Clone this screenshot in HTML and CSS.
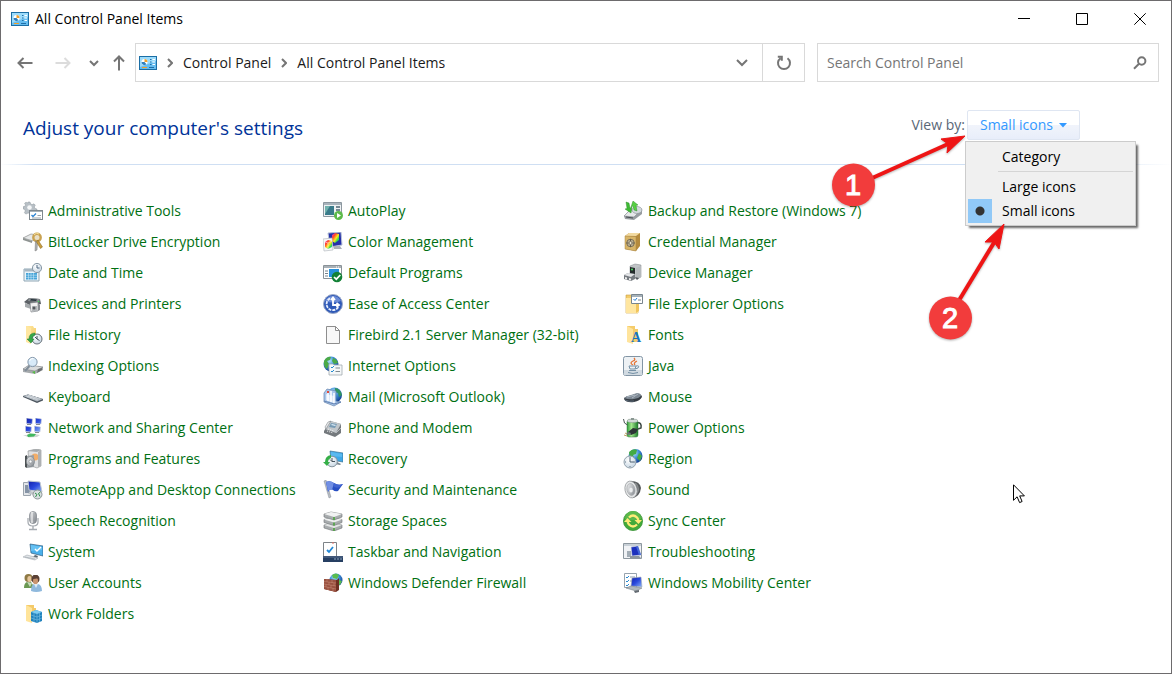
FILE: index.html
```
<!DOCTYPE html>
<html lang="en">
<head>
    <meta charset="UTF-8">
    <title>All Control Panel Items</title>
    <link rel="stylesheet" href="styles.css">
</head>
<body>
    <!-- shared gradients and the control panel logo -->
    <svg class="defs" aria-hidden="true">
        <defs>
            <linearGradient id="silver" x1="0" y1="0" x2="1" y2="1"><stop offset="0" stop-color="#f4f5f6"/><stop offset="1" stop-color="#7d8288"/></linearGradient>
            <linearGradient id="screen" x1="0" y1="0" x2="1" y2="1"><stop offset="0" stop-color="#1220a8"/><stop offset=".5" stop-color="#2a49dd"/><stop offset="1" stop-color="#8fb6f5"/></linearGradient>
            <linearGradient id="folder" x1="0" y1="0" x2="1" y2="1"><stop offset="0" stop-color="#ffe9a6"/><stop offset="1" stop-color="#f2c65c"/></linearGradient>
            <radialGradient id="globe" cx=".4" cy=".3" r=".7"><stop offset="0" stop-color="#b5e3fb"/><stop offset=".5" stop-color="#3d8fd8"/><stop offset="1" stop-color="#123f92"/></radialGradient>
            <radialGradient id="clock" cx=".4" cy=".35" r=".7"><stop offset="0" stop-color="#ffffff"/><stop offset="1" stop-color="#c3d3e0"/></radialGradient>
            <linearGradient id="green" x1="0" y1="0" x2="1" y2="0"><stop offset="0" stop-color="#2d9d38"/><stop offset=".4" stop-color="#a3e88d"/><stop offset="1" stop-color="#1a7a29"/></linearGradient>
            <linearGradient id="rainbow" x1="0" y1="0" x2="1" y2="1"><stop offset="0" stop-color="#f32bd0"/><stop offset=".3" stop-color="#ff4a2a"/><stop offset=".55" stop-color="#ffe81e"/><stop offset=".75" stop-color="#35dc4a"/><stop offset="1" stop-color="#1aa8ff"/></linearGradient>
            <symbol id="panel" viewBox="0 0 18 14">
                <rect x=".5" y=".5" width="17" height="13" fill="#66bdf0" stroke="#1b6ea5"/>
                <path d="M1 1h16v4L1 11z" fill="#9bdbfb"/>
                <circle cx="5.500" cy="6" r="3" fill="#fff"/>
                <path d="M5.500 6V3a3 3 0 0 1 3 3z" fill="#f0a02c"/>
                <path d="M5.500 6H2.500a3 3 0 0 0 5 2.200z" fill="#2f7fbd"/>
                <path d="M11 3.500h1.500M11 6h1.500M11 8.500h1.500" stroke="#1f6fa8"/>
                <path d="M13.500 3.500H16M13.500 6H16M13.500 8.500H16" stroke="#fff"/>
                <path d="M3 11.500h5" stroke="#f0a02c"/>
                <path d="M10 11.500h5" stroke="#1f6fa8"/>
            </symbol>
        </defs>
    </svg>

    <div class="window">
        <header class="title-bar">
            <svg class="logo" aria-hidden="true"><use href="#panel"/></svg>
            <h1 class="title">All Control Panel Items</h1>
            <div class="win-buttons">
                <button type="button" aria-label="Minimize"><svg width="12" height="12"><path d="M0 5.500h12"/></svg></button>
                <button type="button" aria-label="Maximize"><svg width="12" height="12"><path d="M.5.500h11v11H.5z"/></svg></button>
                <button type="button" aria-label="Close"><svg width="12" height="12"><path d="M.3.300l11.400 11.400M11.700.300L.3 11.700"/></svg></button>
            </div>
        </header>

        <nav class="nav-bar" aria-label="Navigation">
            <div class="history">
                <button type="button" class="back" aria-label="Back"><svg width="16" height="12"><path d="M15.500 6H1.500M6.500 1L1.500 6l5 5"/></svg></button>
                <button type="button" class="forward" aria-label="Forward" disabled><svg width="16" height="12"><path d="M.5 6h14M9.500 1l5 5-5 5"/></svg></button>
                <button type="button" class="recent" aria-label="Recent locations"><svg width="10" height="8"><path d="M1 2l4 4 4-4"/></svg></button>
                <button type="button" class="up" aria-label="Up"><svg width="12" height="16"><path d="M6 15.500v-14M1 6.500l5-5 5 5"/></svg></button>
            </div>
            <div class="address">
                <svg class="logo" aria-hidden="true"><use href="#panel"/></svg>
                <ol class="crumbs">
                    <li><svg width="6" height="10"><path d="M1 1l4 4-4 4"/></svg><a href="#">Control Panel</a></li>
                    <li><svg width="6" height="10"><path d="M1 1l4 4-4 4"/></svg><a href="#">All Control Panel Items</a></li>
                </ol>
                <button type="button" class="previous" aria-label="Previous locations"><svg width="12" height="8"><path d="M1 1l5 5 5-5"/></svg></button>
                <button type="button" class="refresh" aria-label="Refresh"><svg width="16" height="16"><path d="M11.500 3.200A6 6 0 1 1 4.500 3.200M1.800 1.800h4v4"/></svg></button>
            </div>
            <form class="search">
                <input type="text" placeholder="Search Control Panel" aria-label="Search Control Panel">
                <button type="button" aria-label="Search"><svg width="14" height="14"><circle cx="8.700" cy="5" r="3.700"/><path d="M6 7.700L1 12.800"/></svg></button>
            </form>
        </nav>

        <main>
            <div class="heading">
                <h2>Adjust your computer's settings</h2>
                <div class="view-by">
                    <span id="view-label">View by:</span>
                    <button type="button" class="view-button" aria-haspopup="menu" aria-expanded="true" aria-describedby="view-label">Small icons <svg width="8" height="5"><path d="M0 0h8L4 4.500z"/></svg></button>
                    <div class="menu" role="menu">
                        <button type="button" role="menuitemradio" aria-checked="false">Category</button>
                        <hr>
                        <button type="button" role="menuitemradio" aria-checked="false">Large icons</button>
                        <button type="button" role="menuitemradio" aria-checked="true">Small icons</button>
                    </div>
                    <!-- numbered steps -->
                    <svg class="steps" width="250" height="250" viewBox="830 100 250 250">
                        <g class="arrow">
                            <path d="M870 179L948 144" />
                            <path d="M958 302L995 241" />
                            <path class="head" d="M965 136l-18 17 1-9-7-5z"/>
                            <path class="head" d="M1004 224l-5 25-5-7-9 0z"/>
                        </g>
                        <circle cx="853.500" cy="185" r="21.500"/>
                        <circle cx="950.500" cy="318" r="21.500"/>
                        <text x="853" y="195">1</text>
                        <text x="950" y="328">2</text>
                    </svg>
                </div>
            </div>

            <div class="items">
                <ul>
                    <li><a href="#"><svg viewBox="0 0 20 20">
                        <path d="M5 1h2l.6 2 1.600.6L11 2.800l1.300 1.400-1 1.700.6 1.500 2 .6v2l-2 .5-.6 1.500H6l-1.500.3-1.700.8-1.400-1.400.9-1.700L1.700 8.500 0 7.800v-2l2-.5.500-1.400-.9-1.600L3 1.200l1.500.7z" fill="#b8c0c6" stroke="#8d969d" stroke-width=".5"/>
                        <circle cx="6.500" cy="6.500" r="2.300" fill="#f5f7f8"/>
                        <rect x="6.500" y="9.500" width="13" height="9" fill="#fff" stroke="#7e878e"/><path d="M7 10.500h12" stroke="#a9b2b9"/><path d="M8.500 14l1.500 1.500 3-3" fill="none" stroke="#2b83d3" stroke-width="1.300"/><path d="M14.500 14.500H18M9 17h9" stroke="#9aa3ab"/>
                    </svg>Administrative Tools</a></li>
                    <li><a href="#"><svg viewBox="0 0 20 20">
                        <path d="M0 6l8-4 7 1-5 6z" fill="#e6e8e8" stroke="#8a8d8c" stroke-width=".7"/><path d="M0 6l9 3v2L0 8z" fill="#8f9492"/>
                        <circle cx="14" cy="5.500" r="3.700" fill="#e9dfc6" stroke="#c9a251" stroke-width="2.400"/><path d="M12.500 9l-.5 10 2-1 .5-8.500z" fill="#aeb1b2" stroke="#777" stroke-width=".5"/><path d="M15 8l4.500 7-2 1.500L13.500 10z" fill="#c99d3d" stroke="#82601d" stroke-width=".5"/><path d="M11 3q2-3 5-1" stroke="#f7e1a1" fill="none"/>
                    </svg>BitLocker Drive Encryption</a></li>
                    <li><a href="#"><svg viewBox="0 0 20 20">
                        <path d="M1 6h15v12H1z" fill="#e9f4fa" stroke="#8fa6b4"/><path d="M1.500 6h14v2.500h-14z" fill="#a7b7c2"/><path d="M3 10h11v6.500H3z" fill="#47a4d8"/><path d="M5.500 10v7M8 10v7M10.500 10v7M3 12.200h11M3 14.400h11" stroke="#d7effb" stroke-width=".5"/>
                        <circle cx="14" cy="5" r="4.600" fill="url(#clock)" stroke="#8999a6"/><path d="M14 2v3h2.500" fill="none" stroke="#4a6580"/>
                    </svg>Date and Time</a></li>
                    <li><a href="#"><svg viewBox="0 0 20 20">
                        <path d="M1 8l5-4 11 1 1 5-10 2z" fill="#5b6065"/><path d="M6 4l11 1-1 3-11-1z" fill="#898e92"/><path d="M8 5l6 .5-1 1.500-6-.5z" fill="#253139"/><path d="M2 9l6 2v4l-6-2z" fill="#a5a9ac"/><circle cx="15.500" cy="7.500" r=".8" fill="#4dd35d"/>
                        <path d="M7 9l8-1v9l-7 1z" fill="#f1f1f1" stroke="#7e8387" stroke-width=".7"/><path d="M9 12h5v5l-5 .5z" fill="#b3b7ba"/><circle cx="11" cy="14" r="1.500" fill="#55595d"/><path d="M15 9l2 2v5l-2 1z" fill="#888c91"/>
                    </svg>Devices and Printers</a></li>
                    <li><a href="#"><svg viewBox="0 0 20 20">
                        <path d="M3 1h7l1 2h2v14H3z" fill="url(#folder)"/><path d="M3 1l5 2v16l-5-2z" fill="#ffe7a1"/>
                        <circle cx="14" cy="14" r="5" fill="url(#clock)" stroke="#68727a"/><path d="M14 11v3l2.500 1.500M14 14l-2-2" fill="none" stroke="#40525d"/><path d="M12 8Q6 8 6 14H4l4 4 3-4H9q0-3 3-4z" fill="#35a84a" stroke="#1e7c31" stroke-width=".5"/>
                    </svg>File History</a></li>
                    <li><a href="#"><svg viewBox="0 0 20 20">
                        <path d="M0 13l6-4 14 2v3l-8 4-12-2z" fill="#a6aaad"/><path d="M0 13l6-4 14 2-8 4z" fill="#dadcdd" stroke="#73777a" stroke-width=".5"/><path d="M9 16l3-1v3" fill="#54bd43"/><path d="M15 13l4-1v2l-5 3z" fill="#6a6e71"/>
                        <circle cx="9.500" cy="6" r="4.600" fill="#d4e8f7" fill-opacity=".9" stroke="#8296aa"/><path d="M6.500 5q1-3 4-2.500" fill="none" stroke="#fff"/><path d="M6.500 10L2 15" stroke="#818d98" stroke-width="2"/>
                    </svg>Indexing Options</a></li>
                    <li><a href="#"><svg viewBox="0 0 20 20">
                        <path d="M0 9l5-1.500L20 12v1.500L14 16 0 10z" fill="#4c555e"/><path d="M0 9l5-1.500L20 12l-6 2.500z" fill="#aab3bb"/><path d="M3 9l12 4M5 8.300l12 4M4 10l4-1.500M7 11l4-1.500M10 12l4-1.500" stroke="#e3e7ea" stroke-width=".5"/>
                    </svg>Keyboard</a></li>
                    <li><a href="#"><svg viewBox="0 0 20 20">
                        <path d="M3.500 0l6 1-.5 5-5.500-.5zM12.500 0l6 1-.5 5-5.500-.5zM2.500 8l6 1-.5 5-5.500-.5zM11.500 8l6 1-.5 5-5.500-.5z" fill="url(#screen)" stroke="#cbd2dd" stroke-width=".6"/><path d="M4 6.500h4M13 6.500h4M3 14.500h4M12 14.500h4" stroke="#83888e"/>
                        <path d="M0 17h4l2-1.500 6 .5 5 1-3 2-8 .5z" fill="#cfd5d3"/><path d="M4 17l3-1.500 6 .5-2 2.500-6 .5z" fill="#41b85d"/>
                    </svg>Network and Sharing Center</a></li>
                    <li><a href="#"><svg viewBox="0 0 20 20">
                        <path d="M5 2l8-2 5 1v16l-4 2-8-3z" fill="#e0e1e2" stroke="#8b8f91" stroke-width=".6"/><path d="M5 2l9 1 4-2-5-1z" fill="#a6aaac"/><circle cx="12" cy="8" r="3.500" fill="#f2ad68"/><path d="M15 3l3-2v16l-3 1z" fill="#aeb1b3"/>
                        <path d="M2 7l2-1v13l-2-1z" fill="#4e5355"/><path d="M4 7l7-1v12l-7 1z" fill="#9ba1a5"/><ellipse cx="7.500" cy="12.500" rx="4" ry="5" fill="url(#silver)" stroke="#7f878d" stroke-width=".7"/><circle cx="7.500" cy="12.500" r="1.500" fill="#fff" stroke="#858c91" stroke-width=".6"/>
                    </svg>Programs and Features</a></li>
                    <li><a href="#"><svg viewBox="0 0 20 20">
                        <path d="M.5 2.500h7v13h-7z" fill="#e3e6ea" stroke="#9ca4ad"/><path d="M2 5h6v8H2z" fill="#8694a6"/><path d="M5 1l12 1 2 10-13-2z" fill="url(#screen)" stroke="#c1c8d0"/><path d="M7 11l7 1-1 3-8-1z" fill="#c2c7cb"/>
                        <circle cx="14.500" cy="14.500" r="4.500" fill="#d8dfe0" stroke="#8d9698"/><path d="M12 13l2 1.500-1.500 2.500M17.500 12l-2 1.500 1.500 3" fill="none" stroke="#31914c"/>
                    </svg>RemoteApp and Desktop Connections</a></li>
                    <li><a href="#"><svg viewBox="0 0 20 20">
                        <path d="M5 7v4q0 4 5 4t5-4V7" fill="none" stroke="#a3a8ae" stroke-width="1.200"/><path d="M10 15v3M6 18.500h8" stroke="#a7acb2" stroke-width="1.400"/>
                        <rect x="6.500" y=".5" width="7" height="12" rx="3.500" fill="url(#silver)" stroke="#858a91" stroke-width=".8"/><path d="M7 3h6M7 5h6M7 7h6M7 9h6" stroke="#797e87" stroke-width=".5"/><path d="M9 1v11" stroke="#fff"/>
                    </svg>Speech Recognition</a></li>
                    <li><a href="#"><svg viewBox="0 0 20 20">
                        <path d="M7 2l13 2v10L8 11z" fill="#4bb0eb" stroke="#315f82" stroke-width=".7"/><path d="M8 3l11 2v3L8 9z" fill="#65c1f3"/><path d="M12 7l2 2 4-4" fill="none" stroke="#fff" stroke-width="1.400"/><path d="M12 13l3 1-1 2-4-1z" fill="#58646e"/>
                        <path d="M0 15l4-2 11 3-3 2z" fill="#e2e5e8" stroke="#a4abb1" stroke-width=".6"/><path d="M2 15l10 2" stroke="#9ba4ab" stroke-width=".6"/>
                    </svg>System</a></li>
                    <li><a href="#"><svg viewBox="0 0 20 20">
                        <path d="M1 15q0-5 3-6h4l4 6z" fill="#6b9953"/><circle cx="5.500" cy="5" r="4" fill="#8f7a45"/><ellipse cx="6.500" cy="6" rx="2.200" ry="3" fill="#e6c69c"/><path d="M4 9l3 5 2-4z" fill="#c9d9bd"/>
                        <path d="M8 18q0-6 3-7h4q4 1 4 7-6 2-11 0z" fill="#8fb9dd"/><circle cx="12.500" cy="6" r="4" fill="#5b4135"/><ellipse cx="12.500" cy="8" rx="2.500" ry="3.300" fill="#c9946f"/><path d="M9.500 6q3 0 6-1l-1-3h-4z" fill="#5a4136"/><path d="M11 11l2 4 2-4z" fill="#dfebf5"/>
                    </svg>User Accounts</a></li>
                    <li><a href="#"><svg viewBox="0 0 20 20">
                        <path d="M3 1h8v3h2v13H3z" fill="#f4ca69"/><path d="M3 1l6 3v15l-6-2z" fill="#ffe49a"/>
                        <path d="M8 8l5-2 6 2v9l-5 2-6-2z" fill="#2182bd"/><path d="M8 8l5-2 6 2-5 2z" fill="#7dcbf1"/><path d="M14 10v9M8 11l6 2 5-2M8 14l6 2 5-2M11 9v9M16.500 9v9" fill="none" stroke="#76bde2" stroke-width=".6"/>
                    </svg>Work Folders</a></li>
                </ul>
                <ul>
                    <li><a href="#"><svg viewBox="0 0 20 20">
                        <path d="M.5 1.500h18v14H.5z" fill="#eef1f3" stroke="#8c979f"/><path d="M1 2h17v2H1z" fill="#a9b4bc"/><path d="M2 5h9v9H2z" fill="#397b8a"/><path d="M2 5h5l-5 8z" fill="#71b2ae"/><path d="M13 6h4M13 9h4" stroke="#768993" stroke-width="2"/>
                        <circle cx="15.500" cy="14.500" r="4.500" fill="#5dba4a"/><path d="M14 12l4 2.500-4 2.500z" fill="#fff"/>
                    </svg>AutoPlay</a></li>
                    <li><a href="#"><svg viewBox="0 0 20 20">
                        <path d="M5 1l13-1 1 13-12 2z" fill="#2530a8" stroke="#b8c2d7"/><path d="M9 3l3-2 4 1v6l-4 3-3-2z" fill="url(#rainbow)"/><path d="M10 14h7l2 3h-8z" fill="#abb1b8"/>
                        <path d="M0 7l9-1 1 12-9 1z" fill="#f6f7f8" stroke="#b8bdc3" stroke-width=".7"/><path d="M2 10l3-2 4 1v6l-4 2-3-2z" fill="url(#rainbow)"/><path d="M2 10l3 1v6M5 11l4-2" fill="none" stroke="#fff" stroke-width=".5"/>
                    </svg>Color Management</a></li>
                    <li><a href="#"><svg viewBox="0 0 20 20">
                        <path d="M.5 2.500h18v13H.5z" fill="#fff" stroke="#8a9298"/><path d="M1 3h17v2H1z" fill="#a9b1b7"/><path d="M13 4h1M15 4h1" stroke="#fff"/><path d="M2 8h3M2 10.500h3M2 13h3" stroke="#74818b" stroke-width="1.200"/><path d="M6 6h10v8H6z" fill="#2791db"/>
                        <circle cx="14" cy="14" r="5.300" fill="#138136"/><path d="M11 14l2.300 2.200 4-4.200" fill="none" stroke="#fff" stroke-width="1.700"/>
                    </svg>Default Programs</a></li>
                    <li><a href="#"><svg viewBox="0 0 20 20">
                        <circle cx="10" cy="10" r="9.500" fill="#2e59b7" stroke="#9ba9c8"/><path d="M2 7a9 9 0 0 1 16 0Q10 10 2 7z" fill="#6c8cd6"/><path d="M15.200 13a6.200 6.200 0 1 1-7-9" fill="none" stroke="#e8effd" stroke-width="1.800" stroke-dasharray="3 1"/><path d="M10 4v7h5M8 6l2-2.500L12 6M13.500 9l2.500 2-2.500 2" fill="none" stroke="#fff" stroke-width="1.800"/>
                    </svg>Ease of Access Center</a></li>
                    <li><a href="#"><svg viewBox="0 0 20 20">
                        <path d="M3.500 1.500h9l4 4v13h-13z" fill="#f8f8f8" stroke="#8e8e8e"/><path d="M12.500 1.500v4h4z" fill="#fff" stroke="#8e8e8e"/>
                    </svg>Firebird 2.1 Server Manager (32-bit)</a></li>
                    <li><a href="#"><svg viewBox="0 0 20 20">
                        <circle cx="8" cy="8" r="7.500" fill="url(#globe)"/><path d="M1 5q3-5 7-4l-1 3-3 1 2 3-2 5Q0 10 1 5zM10 2q4 1 5 5l-4 1-2-3z" fill="#4baa47"/>
                        <path d="M6 8h4l1 1h8v10H6z" fill="#f4f7f8" stroke="#a1a9af" stroke-width=".8"/><path d="M8 11l1 1 2-2M8 15l1 1 2-2" fill="none" stroke="#238bd0"/><path d="M12.500 12H17M12.500 15.500H17" stroke="#7f8a91"/>
                    </svg>Internet Options</a></li>
                    <li><a href="#"><svg viewBox="0 0 20 20">
                        <circle cx="11.500" cy="8" r="7.500" fill="url(#globe)"/><path d="M12 1q5 0 7 7l-3 2-1-4-3-1z" fill="#309460"/>
                        <path d="M1 6l3-4 9 2v10l5 1-7 4-10-4z" fill="#a9c7eb" stroke="#6482ae" stroke-width=".7"/><path d="M3 7l8 2v7l-8-3z" fill="#dce9f8"/><path d="M5 5v9M8 4v11M11 6v10" stroke="#fff" stroke-width="1.500"/><path d="M4 4h2v2H4z" fill="#e24b3b"/><path d="M1 14l10 3 7-2" fill="none" stroke="#6683b1"/>
                    </svg>Mail (Microsoft Outlook)</a></li>
                    <li><a href="#"><svg viewBox="0 0 20 20">
                        <path d="M1 13l6-10 11 3v9l-6 4-11-4z" fill="#74797d"/><path d="M2 11l6-8 10 3-5 9z" fill="#c1c6ca"/><path d="M8 5l6 1-2 4-6-1z" fill="#769ab4"/><path d="M9 6l4 1-1 1-4-1z" fill="#d8eaf5"/><path d="M2 9l3-5 3-1-5 8z" fill="#e3e5e7" stroke="#777c80" stroke-width=".5"/><path d="M5 11l6 2M4 13l6 2" stroke="#efefef" stroke-dasharray="1 1"/><path d="M13 15l5-5" stroke="#b6babd"/>
                    </svg>Phone and Modem</a></li>
                    <li><a href="#"><svg viewBox="0 0 20 20">
                        <path d="M7 2l13 2v9L8 11z" fill="#3fa8e7" stroke="#3e7294" stroke-width=".7"/><path d="M8 3l11 2v3L8 7z" fill="#5ab9f0"/><path d="M14 13l4 2-1 1-5-1z" fill="#79858e"/>
                        <circle cx="9" cy="12.500" r="5.300" fill="url(#clock)" stroke="#87959e"/><path d="M9 9v3.500h3M9 12.500l-2-2" fill="none" stroke="#44535e"/><path d="M8 6Q2 7 2 13H0l4 4 3-4H5q0-3 3-4z" fill="#36af48"/>
                    </svg>Recovery</a></li>
                    <li><a href="#"><svg viewBox="0 0 20 20">
                        <path d="M1 1l2-1 5 17-2 1z" fill="#b8bdc4" stroke="#747c88" stroke-width=".4"/><path d="M3 2q4-2 8 1 4 3 9 1l-5 7q-3 1-5-1-3-2-5 2z" fill="#284fc3"/><path d="M3 2q4-2 8 1l-2 7q-2-1-4 1z" fill="#718fe4"/><path d="M11 3q4 3 9 1l-3 3q-4 2-7-1z" fill="#4164d0"/>
                    </svg>Security and Maintenance</a></li>
                    <li><a href="#"><svg viewBox="0 0 20 20">
                        <path d="M1 14l7-2 11 2v3l-8 3-10-3z" fill="#a8acae" stroke="#6f7476" stroke-width=".6"/><path d="M1 14l7-2 11 2-8 3z" fill="#e4e6e6"/>
                        <path d="M1 8.500l7-2 11 2v3l-8 3-10-3z" fill="#a8acae" stroke="#6f7476" stroke-width=".6"/><path d="M1 8.500l7-2 11 2-8 3z" fill="#eef0f0"/>
                        <path d="M1 3l7-2 11 2v3l-8 3-10-3z" fill="#a8acae" stroke="#6f7476" stroke-width=".6"/><path d="M1 3l7-2 11 2-8 3z" fill="#f1f2f2"/><path d="M11 6v3M11 11.500v3M11 17v3" stroke="#47a538" stroke-width="1.500"/>
                    </svg>Storage Spaces</a></li>
                    <li><a href="#"><svg viewBox="0 0 20 20">
                        <path d="M.5.500h13v14H.5z" fill="#fff" stroke="#7d8388"/><path d="M9 1h2" stroke="#e26c63"/><path d="M4 8l2 2 4-5" fill="none" stroke="#2187d7" stroke-width="1.800"/><path d="M0 14h20v6H0z" fill="#263f62"/><path d="M0 14h20v2H0z" fill="#41587a"/><path d="M11 17h2M14 17h2M17 17h2" stroke="#8ea4bf"/>
                    </svg>Taskbar and Navigation</a></li>
                    <li><a href="#"><svg viewBox="0 0 20 20">
                        <circle cx="13" cy="7" r="6.500" fill="url(#globe)"/><path d="M9 2q4-3 7 0l-2 4-4-1zM16 7l3 1-2 4-2-1z" fill="#59bd4d"/>
                        <path d="M1 6l13 1 2-2v12l-3 2-12-3z" fill="#6f3022"/><path d="M1 6l12 1v12L1 16z" fill="#9a5140"/><path d="M1 8.500l12 1.500M1 11l12 2M1 13.500l12 2.500M4 6v3M9 7v3M6 9v3M11 10v3M3 11v3M8 12v3M5 14v3M10 15v3" stroke="#c98e7a" stroke-width=".5"/>
                    </svg>Windows Defender Firewall</a></li>
                </ul>
                <ul>
                    <li><a href="#"><svg viewBox="0 0 20 20">
                        <path d="M1 15l5-5 13-2v5l-8 6-9-1z" fill="#989da1"/><path d="M1 15l6-6 12-1-8 8z" fill="#e6e8e9" stroke="#777d82" stroke-width=".5"/><ellipse cx="14" cy="9" rx="5" ry="3.500" fill="#d3d9dc" stroke="#848d93" stroke-width=".6"/><path d="M3 16l7 1" stroke="#4a5055"/>
                        <path d="M3 1l3 1 1 5 2-1-1 6-6-4 2-.5z" fill="#3fbb35" stroke="#21831e" stroke-width=".4"/><path d="M14 10l-3-1-1-4-2 1 2-6 5 4-2 .5z" fill="#57cf43" stroke="#21831e" stroke-width=".4"/>
                    </svg>Backup and Restore (Windows 7)</a></li>
                    <li><a href="#"><svg viewBox="0 0 20 20">
                        <path d="M2 4l4-3h11v13l-4 5L2 17z" fill="#b58b3d"/><path d="M2 4l4-3h11l-4 3z" fill="#f2daa0"/><path d="M2 4l11 .5V19L2 17z" fill="#d8b568" stroke="#a98545" stroke-width=".5"/><circle cx="7.500" cy="11" r="3.800" fill="#b9ae93" stroke="#7d7158"/><circle cx="7.500" cy="11" r="1.500" fill="#eee6d1" stroke="#665e4c" stroke-width=".7"/><path d="M7.500 7v2M7.500 13v2M3.500 11h2M9.500 11h2" stroke="#675d48"/>
                    </svg>Credential Manager</a></li>
                    <li><a href="#"><svg viewBox="0 0 20 20">
                        <path d="M7 3l5-2 6 1v12l-4 2-7-3z" fill="#c1c4c7" stroke="#7d8286" stroke-width=".5"/><path d="M7 4l5 1v8l-5-1z" fill="#252c2c"/><circle cx="9" cy="6.500" r="1" fill="#4cda62"/><path d="M13 5l5-2v11l-5 2z" fill="#b5b9bc"/>
                        <path d="M1 12l4-2 7 1v5l-4 2-7-2z" fill="#767b80"/><path d="M1 12l4-2 7 1-4 3z" fill="#e2e4e6"/><path d="M2 14l2 .5v2L2 16zM6 15l2 .5v2L6 17z" fill="#ededed"/><path d="M12 14l4 1-2 2z" fill="#55595e"/>
                    </svg>Device Manager</a></li>
                    <li><a href="#"><svg viewBox="0 0 20 20">
                        <path d="M3 1h7l2 2h3v16H3z" fill="#f3cc6b" stroke="#c99f40" stroke-width=".6"/><path d="M3 4h12v15H3z" fill="#ffe6a0"/><path d="M13 19l3-2V7h-3z" fill="#f0c55e"/>
                        <path d="M8.500.500h11v9h-11z" fill="#fff" stroke="#78858e"/><path d="M9 1h10v2H9z" fill="#a6b2ba"/><path d="M10.500 5l1.500 1.500L14 4" fill="none" stroke="#237fd2"/><path d="M15 6h3" stroke="#75828b"/>
                    </svg>File Explorer Options</a></li>
                    <li><a href="#"><svg viewBox="0 0 20 20">
                        <path d="M4 1h8v3h3v13H4z" fill="#f5cc6b"/><path d="M4 1l6 3v15l-6-2z" fill="#ffe49c"/>
                        <text x="8" y="17" class="font-mark">A</text>
                    </svg>Fonts</a></li>
                    <li><a href="#"><svg viewBox="0 0 20 20">
                        <rect x=".5" y=".5" width="19" height="19" rx="2" fill="#edf1f4" stroke="#8295a5"/><path d="M1 14h18v5H1z" fill="#d1dae1"/>
                        <path d="M10 9q-4-2 0-4 3-1 1-3M12 9q-2-2 2-4" fill="none" stroke="#e57436" stroke-width="1.300"/><path d="M6 10h7l-1 3H7zM6 14.500h7M5 16.500q5 2 10 0M13 10q4-1 2 2l-3 1" fill="none" stroke="#7490a5"/>
                    </svg>Java</a></li>
                    <li><a href="#"><svg viewBox="0 0 20 20">
                        <path d="M1 12q0-2 5-3l8-2q5 0 5 3-2 4-8 5-8 1-10-3z" fill="#363c43"/><path d="M1 11q2-2 7-3l6-2q4 0 4 3-3 3-7 3-5 1-10-1z" fill="#7d8893"/><path d="M4 10l8-2M9 11l6-4" stroke="#b9c3cd" stroke-width=".8"/><path d="M2 13q4 2 9 1" fill="none" stroke="#5c6b7a"/>
                    </svg>Mouse</a></li>
                    <li><a href="#"><svg viewBox="0 0 20 20">
                        <path d="M14 5q5-1 4 5l-3 1" fill="none" stroke="#3b4743" stroke-width="1.500"/><rect x="4" y="2" width="11" height="17" rx="2" fill="url(#green)" stroke="#397840" stroke-width=".5"/><ellipse cx="9.500" cy="2.800" rx="5.500" ry="1.800" fill="#d4dbd9" stroke="#818e87" stroke-width=".5"/><path d="M8 0h3v2H8z" fill="#8a9792"/>
                        <path d="M.5 1q0 5 4 6" fill="none" stroke="#4a5553"/><path d="M5 14l5-4 5 1-2 4-5 2z" fill="#2d3535"/><path d="M5 14l3 1-1 2-4-1z" fill="#6a7475"/><path d="M2 15l2 1M1 17l3 1" stroke="#c1a465"/>
                    </svg>Power Options</a></li>
                    <li><a href="#"><svg viewBox="0 0 20 20">
                        <circle cx="12.500" cy="7" r="7" fill="url(#globe)"/><path d="M6 3q4-4 8-2l-1 4-3 1 1 3-4 1zM16 4l3 3-2 5-3-3z" fill="#43ab42"/>
                        <circle cx="7" cy="13" r="6" fill="url(#clock)" stroke="#93a1ac"/><path d="M7 9v4h4" fill="none" stroke="#4c6071"/><path d="M7 8v1M7 17v1M2 13h1M11 13h1" stroke="#667987"/>
                    </svg>Region</a></li>
                    <li><a href="#"><svg viewBox="0 0 20 20">
                        <path d="M8 1q9 0 10 7-1 8-8 10z" fill="#55585a"/><path d="M12 3q4 3 3 8l-3 5" fill="none" stroke="#85898b" stroke-width="1.500"/>
                        <ellipse cx="8" cy="9.500" rx="6" ry="8.500" fill="#e4e6e7" stroke="#8f9396" stroke-width=".7" transform="rotate(-12 8 9.500)"/><ellipse cx="8" cy="9.500" rx="4" ry="6" fill="url(#silver)" stroke="#a2a6a9" stroke-width=".6" transform="rotate(-12 8 9.500)"/><ellipse cx="8" cy="10" rx="1.800" ry="2.600" fill="#eceeef"/>
                    </svg>Sound</a></li>
                    <li><a href="#"><svg viewBox="0 0 20 20">
                        <circle cx="10" cy="10" r="9.600" fill="#43aa39" stroke="#2f8d2d" stroke-width=".7"/><path d="M2 8a8 8 0 0 1 16 0Q10 10 2 8z" fill="#5cb94b"/><path d="M6 6.500q4-4 8 0l1.500 2.500M14 13.500q-4 4-8 0L4.500 11" fill="none" stroke="#ffeb78" stroke-width="2.300"/><path d="M11.500 9h7.500l-3.500 4zM1 11h7.500L4.500 7z" fill="#ffeb78"/>
                    </svg>Sync Center</a></li>
                    <li><a href="#"><svg viewBox="0 0 20 20">
                        <path d="M.5 1.500h18v15H.5z" fill="#f0f2f5" stroke="#8d979f"/><path d="M1 2h17v2H1z" fill="#c8d0d7"/><path d="M4 9h4v6H4z" fill="#a3adb6"/><path d="M8 5l7-1 3 9-9 1z" fill="#1b30bd" stroke="#d0d6dd" stroke-width=".6"/><path d="M13 4.500l2-.3 3 8.500-2 .5z" fill="#4468d8"/><path d="M7 14l9 0 2 2H7z" fill="#8c969e"/>
                    </svg>Troubleshooting</a></li>
                    <li><a href="#"><svg viewBox="0 0 20 20">
                        <path d="M1.500.500h12v14h-12z" fill="#fff" stroke="#97a3ae"/><path d="M3 4l1 1 2-2M3 8l1 1 2-2M3 12l1 1 2-2" fill="none" stroke="#2789d0"/><path d="M7 4h5M7 8h5" stroke="#8f9eaa"/>
                        <path d="M9 5l9-1 1 10-11-1z" fill="url(#screen)" stroke="#a8b1ba" stroke-width=".6"/><path d="M3 15l5-2 11 2-6 3z" fill="#b0b7bd" stroke="#6a747d" stroke-width=".5"/><path d="M11 18l5-1v2l-4 1z" fill="#626970"/>
                    </svg>Windows Mobility Center</a></li>
                </ul>
            </div>
        </main>

        <svg class="cursor" width="12" height="20" aria-hidden="true"><path d="M.5.800v15.500l3.600-3.500 2.500 5.800 2.500-1.100-2.400-5.600h4.700z"/></svg>
    </div>
</body>
</html>
```

FILE: styles.css
```
* {
    margin: 0;
    padding: 0;
    box-sizing: border-box;
}
body {
    font-family: "Open Sans", "Noto Sans", sans-serif;
    font-size: 14px;
    line-height: 20px;
    color: #000;
    background: #fff;
}
ul, ol {
    list-style: none;
}
a {
    color: inherit;
    text-decoration: none;
}
button, input {
    font: inherit;
    border: 0;
    background: none;
    outline: none;
}
svg {
    flex: none;
}
.defs {
    position: absolute;
    width: 0;
    height: 0;
}
.window {
    position: relative;
    min-height: 100vh;
    border: 1px solid #6d6b6d;
    background: #fff;
}
.logo {
    width: 18px;
    height: 14px;
}

/* title bar */
.title-bar {
    display: flex;
    align-items: center;
    height: 36px;
    padding: 0 2px 0 10px;
}
.title {
    flex: 1;
    margin-left: 6px;
    font-size: 14px;
    font-weight: 400;
}
.win-buttons {
    display: flex;
}
.win-buttons button {
    width: 58px;
    height: 36px;
}
.win-buttons svg {
    display: block;
    margin: 0 auto;
    fill: none;
    stroke: #000;
}

/* navigation */
.nav-bar {
    display: flex;
    padding: 6px 12px 0 5px;
}
.nav-bar svg {
    fill: none;
    stroke: #757575;
    stroke-width: 2;
}
.nav-bar .logo {
    stroke: none;
    stroke-width: 1;
}
.nav-bar button {
    display: flex;
    align-items: center;
    justify-content: center;
}
.history {
    display: flex;
    margin-right: 2px;
}
.history .back,
.history .forward {
    width: 38px;
}
.history .forward svg {
    stroke: #dcdcdc;
}
.history .recent {
    width: 23px;
}
.history .up {
    width: 28px;
}
.address {
    display: flex;
    flex: 1;
    align-items: center;
    height: 39px;
    padding-left: 3px;
    border: 1px solid #d9d9d9;
}
.crumbs {
    display: flex;
    flex: 1;
    color: #1a1a1a;
}
.crumbs li {
    display: flex;
    align-items: center;
    gap: 10px;
    margin-left: 10px;
    white-space: nowrap;
}
.previous {
    width: 40px;
    height: 37px;
}
.refresh {
    width: 42px;
    height: 37px;
    border-left: 1px solid #d9d9d9;
}
.search {
    display: flex;
    flex: 0 1 342px;
    height: 39px;
    margin-left: 12px;
    border: 1px solid #d9d9d9;
}
.search input {
    flex: 1;
    min-width: 0;
    padding-left: 9px;
}
.search input::placeholder {
    color: #767676;
    opacity: 1;
}
.search button {
    width: 36px;
}

/* heading */
.heading {
    display: flex;
    align-items: flex-end;
    justify-content: space-between;
    padding: 28px 91px 24px 22px;
    border-bottom: 1px solid;
    border-image: linear-gradient(to right, #fff, #cfdff3 3%, #cfdff3 92%, #fff) 1;
}
.heading h2 {
    font-size: 19px;
    line-height: 24px;
    font-weight: 400;
    color: #003399;
}
.view-by {
    display: flex;
    align-items: center;
    gap: 2px;
    position: relative;
    color: #5a6777;
}
.view-button {
    display: flex;
    align-items: center;
    gap: 6px;
    height: 30px;
    padding: 0 12px;
    border: 1px solid #dfe6f2;
    border-radius: 2px;
    color: #3399ff;
    background: linear-gradient(#fff 50%, #f1f4fb 50%, #e8eefa);
}
.view-button svg {
    fill: #3399ff;
}
.menu {
    position: absolute;
    z-index: 1;
    top: 31px;
    right: -56px;
    width: 171px;
    padding: 3px 2px 2px;
    border: 1px solid #ccc;
    background: #f0f0f0;
    box-shadow: 3px 3px 2px -1px rgba(0, 0, 0, .6);
}
.menu button {
    display: block;
    width: 100%;
    height: 24px;
    padding-left: 34px;
    text-align: left;
    color: #000;
}
.menu hr {
    height: 1px;
    margin: 2px 0 3px 30px;
    border: 0;
    background: #d5d5d5;
}
/* tick square in the left gutter of the menu */
.menu button[aria-checked="true"] {
    background: radial-gradient(circle, #333 4px, transparent 5px) 0 0 / 24px 24px no-repeat,
        linear-gradient(#91c9f7, #91c9f7) 0 0 / 24px 24px no-repeat;
}

/* numbered steps over the window */
.steps {
    position: absolute;
    z-index: 2;
    top: -10px;
    right: 0;
    pointer-events: none;
}
.steps circle {
    fill: #f23c3c;
    filter: drop-shadow(0 1px 1px rgba(0, 0, 0, .3));
}
.steps text {
    fill: #fff;
    stroke: #fff;
    font-family: "Liberation Sans", sans-serif;
    font-size: 29px;
    text-anchor: middle;
}
.arrow {
    fill: none;
    stroke: #ee1515;
    stroke-width: 4;
    filter: drop-shadow(0 1px 1px rgba(0, 0, 0, .3));
}
.arrow .head {
    fill: #ee1515;
    stroke-width: 1;
}

/* items */
.items {
    display: flex;
    flex-wrap: wrap;
    padding: 30px 22px;
    color: #006f12;
}
.items ul {
    width: 300px;
}
.items a {
    display: flex;
    align-items: center;
    gap: 5px;
    height: 31px;
    white-space: nowrap;
}
.items svg {
    width: 20px;
    height: 20px;
}
.font-mark {
    fill: #1976bd;
    font-family: "Liberation Serif", serif;
    font-size: 14px;
    font-weight: 700;
}
.cursor {
    position: absolute;
    left: 1012px;
    top: 483px;
    fill: #fff;
    stroke: #000;
}
```
